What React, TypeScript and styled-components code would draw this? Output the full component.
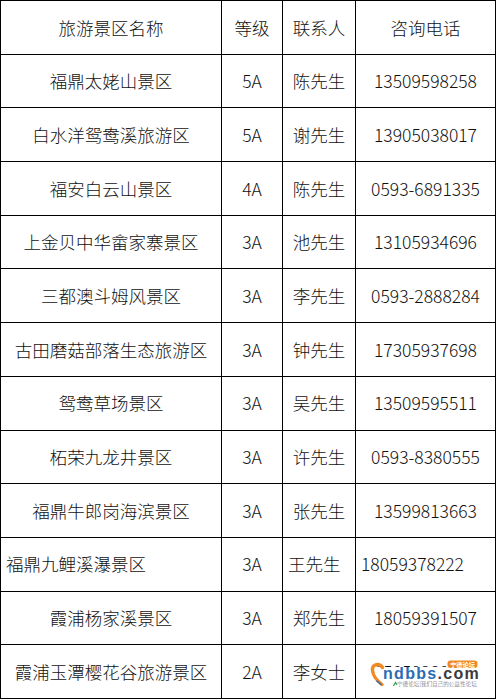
import React from "react";
import styled, { createGlobalStyle } from "styled-components";

const Global = createGlobalStyle`
  html, body { margin: 0; padding: 0; background: #ffffff; }
  body { font-family: "Noto Sans CJK SC", "Noto Sans", sans-serif; }
`;

const Table = styled.div`
  width: 496px;
  display: grid;
  grid-template-columns: 221px 61px 73px 140px;
  grid-auto-rows: 53.7px;
  border-top: 1px solid #000;
  border-left: 1px solid #000;
  box-sizing: border-box;
  background: #fff;
`;

const Cell = styled.div<{ $align?: "left" | "center" }>`
  position: relative;
  display: flex;
  align-items: center;
  justify-content: ${(p) => (p.$align === "left" ? "flex-start" : "center")};
  padding-left: ${(p) => (p.$align === "left" ? "5px" : "0")};
  border-right: 1px solid #000;
  border-bottom: 1px solid #000;
  font-family: "Noto Sans CJK SC", "Noto Sans", sans-serif;
  font-weight: 300;
  font-size: 17.5px;
  line-height: 1;
  color: #111;
  white-space: nowrap;
  overflow: visible;
`;

const Watermark = styled.svg`
  position: absolute;
  left: 10px;
  top: 14px;
  width: 120px;
  height: 30px;
  overflow: visible;
`;

type Row = {
  name: string;
  level: string;
  contact: string;
  phone: string;
  left?: boolean;
  mark?: boolean;
};

const rows: Row[] = [
  { name: "福鼎太姥山景区", level: "5A", contact: "陈先生", phone: "13509598258" },
  { name: "白水洋鸳鸯溪旅游区", level: "5A", contact: "谢先生", phone: "13905038017" },
  { name: "福安白云山景区", level: "4A", contact: "陈先生", phone: "0593-6891335" },
  { name: "上金贝中华畲家寨景区", level: "3A", contact: "池先生", phone: "13105934696" },
  { name: "三都澳斗姆风景区", level: "3A", contact: "李先生", phone: "0593-2888284" },
  { name: "古田磨菇部落生态旅游区", level: "3A", contact: "钟先生", phone: "17305937698" },
  { name: "鸳鸯草场景区", level: "3A", contact: "吴先生", phone: "13509595511" },
  { name: "柘荣九龙井景区", level: "3A", contact: "许先生", phone: "0593-8380555" },
  { name: "福鼎牛郎岗海滨景区", level: "3A", contact: "张先生", phone: "13599813663" },
  { name: "福鼎九鲤溪瀑景区", level: "3A", contact: "王先生", phone: "18059378222", left: true },
  { name: "霞浦杨家溪景区", level: "3A", contact: "郑先生", phone: "18059391507" },
  { name: "霞浦玉潭樱花谷旅游景区", level: "2A", contact: "李女士", phone: "15059380800", mark: true },
];

function Logo() {
  return (
    <Watermark viewBox="0 0 120 30">
      <rect x="0" y="8" width="120" height="22" fill="#ffffff" />
      <path
        d="M16.5 8.5 C13.5 4, 6 4.5, 6.5 11.5 C7 17.5, 11.5 22, 16 25.5"
        fill="none"
        stroke="#f08a24"
        strokeWidth="3.4"
        strokeLinecap="round"
      />
      <path d="M11 22 L15 25.5" stroke="#2c6db3" strokeWidth="1.6" strokeLinecap="round" />
      <text
        x="17"
        y="19.5"
        fontFamily="'Liberation Sans', Arial, sans-serif"
        fontWeight="700"
        fontSize="16"
        letterSpacing="1.3"
      >
        <tspan fill="#2b6cb4">ndbbs</tspan>
        <tspan fill="#3a3a3a">.com</tspan>
      </text>
      <rect x="81.5" y="1.5" width="30" height="7.5" rx="3" fill="#f08a24" />
      <text
        x="96.5"
        y="7.6"
        textAnchor="middle"
        fontFamily="'Noto Sans CJK SC', sans-serif"
        fontSize="6.2"
        fontWeight="700"
        fill="#ffffff"
      >
        宁德论坛
      </text>
      <path d="M27.5 27 L29.5 23.5 L31 26" stroke="#3a9a4a" strokeWidth="1.2" fill="none" />
      <text
        x="31"
        y="27.3"
        fontFamily="'Noto Sans CJK SC', sans-serif"
        fontSize="5.6"
        fill="#4a4a5a"
      >
        宁德论坛|我们自己的公益性论坛
      </text>
    </Watermark>
  );
}

export default function App() {
  return (
    <>
      <Global />
      <Table>
        <Cell>旅游景区名称</Cell>
        <Cell>等级</Cell>
        <Cell>联系人</Cell>
        <Cell>咨询电话</Cell>
        {rows.map((r, i) => (
          <React.Fragment key={i}>
            <Cell $align={r.left ? "left" : "center"}>{r.name}</Cell>
            <Cell>{r.level}</Cell>
            <Cell $align={r.left ? "left" : "center"}>{r.contact}</Cell>
            <Cell $align={r.left ? "left" : "center"}>
              {r.phone}
              {r.mark && <Logo />}
            </Cell>
          </React.Fragment>
        ))}
      </Table>
    </>
  );
}
